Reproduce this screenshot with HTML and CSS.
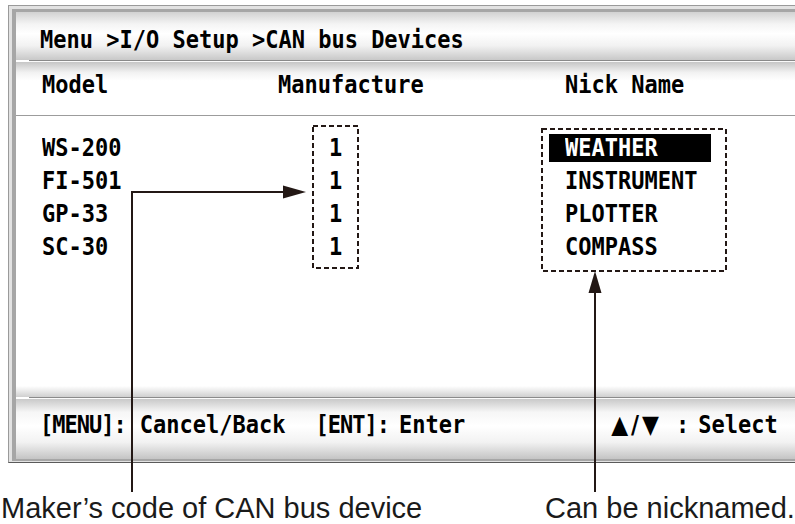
FILE: index.html
```html
<!DOCTYPE html>
<html>
<head>
	<title>CAN bus Devices</title>
	<meta charset="UTF-8">
	<meta name="viewport" content="width=device-width, initial-scale=1.0">
	<link rel="stylesheet" href="styles.css">
</head>
<body>
	<div class="figure">
		<div class="bezel">
			<div class="screen">
				<div class="title"><span class="lcd">Menu &gt;I/O Setup &gt;CAN bus Devices</span></div>
				<div class="rule"></div>
				<div class="head">
					<span class="lcd head-model">Model</span>
					<span class="lcd head-maker">Manufacture</span>
					<span class="lcd">Nick Name</span>
				</div>
				<div class="list">
					<div class="model">
						<span class="lcd">WS-200</span>
						<span class="lcd">FI-501</span>
						<span class="lcd">GP-33</span>
						<span class="lcd">SC-30</span>
					</div>
					<div class="maker">
						<span class="lcd">1</span>
						<span class="lcd">1</span>
						<span class="lcd">1</span>
						<span class="lcd">1</span>
					</div>
					<div class="nick">
						<div class="nick-row sel"><span class="lcd">WEATHER</span></div>
						<div class="nick-row"><span class="lcd">INSTRUMENT</span></div>
						<div class="nick-row"><span class="lcd">PLOTTER</span></div>
						<div class="nick-row"><span class="lcd">COMPASS</span></div>
					</div>
				</div>
				<div class="band"></div>
				<div class="rule"></div>
				<div class="foot">
					<span class="lcd key">[MENU]</span>
					<span class="lcd">:</span>
					<span class="lcd cancel">Cancel/Back</span>
					<span class="lcd key key-ent">[ENT]</span>
					<span class="lcd">:</span>
					<span class="lcd enter">Enter</span>
					<span class="lcd arrows">▲/▼</span>
					<span class="lcd colon-sel">:</span>
					<span class="lcd select">Select</span>
				</div>
			</div>
		</div>

		<!-- callouts drawn over the screen -->
		<svg class="notes" width="795" height="524" viewBox="0 0 795 524">
			<g fill="none" stroke="#231815" stroke-width="2">
				<rect x="313" y="126" width="45" height="142" stroke-dasharray="5 3"/>
				<rect x="542" y="129" width="184" height="142" stroke-dasharray="5 3"/>
				<polyline points="132,492 132,192 286,192"/>
				<line x1="595" y1="492" x2="595" y2="290"/>
			</g>
			<g fill="#231815">
				<polygon points="283,185.5 306,192 283,198.5"/>
				<polygon points="588.5,293 595,271 601.5,293"/>
			</g>
		</svg>

		<div class="captions">
			<span class="cap-maker">Maker’s code of CAN bus device</span>
			<span>Can be nicknamed.</span>
		</div>
	</div>
</body>
</html>
```

FILE: styles.css
```css
body {
	margin: 0;
	background-color: #fff;
	font-family: "Liberation Sans", Arial, sans-serif;
}
.figure {
	position: relative;
	width: 795px;
	height: 524px;
	overflow: hidden;
}

/* frame round the display */
.bezel {
	margin: 5px 0 0 8px;
	border-top: 1px solid #9a9a9a;
	border-left: 1px solid #9a9a9a;
	border-bottom: 1px solid #5a5a5a;
	padding: 3px 0 1px 3px;
	background-color: #e2e2e2;
}
.screen {
	border-top: 3px solid #a6a6a6;
	border-left: 4px solid #a6a6a6;
	border-bottom: 2px solid #a6a6a6;
	background-color: #fff;
}

/* LCD style text */
.lcd {
	display: block;
	font-family: "DejaVu Sans Mono", "Liberation Mono", monospace;
	font-weight: bold;
	font-size: 22px;
	line-height: 33px;
	color: #000;
	white-space: pre;
	transform: scaleY(1.15);
}

.title {
	height: 48px;
	box-sizing: border-box;
	padding: 11px 0 0 24px;
	background: linear-gradient(#d2d2d2 0%, #f4f4f4 25%, #fff 45%, #f2f2f2 70%, #c8c8c8 100%);
}
.rule {
	height: 1px;
	margin-left: 13px;
	border-top: 1px solid #8a8a8a;
	background-color: #fafafa;
}
.head {
	display: flex;
	align-items: flex-start;
	height: 54px;
	box-sizing: border-box;
	padding: 6px 0 0 26px;
	border-bottom: 1px solid #9c9c9c;
	background: linear-gradient(#c6c6c6 0%, #f2f2f2 20%, #fff 35%, #fff 100%);
}
.head-model {
	width: 236px;
}
.head-maker {
	width: 287px;
}

/* device list */
.list {
	display: flex;
	align-items: flex-start;
	height: 270px;
	box-sizing: border-box;
	padding-top: 15px;
}
.model {
	width: 296px;
	box-sizing: border-box;
	padding-left: 26px;
}
.maker {
	width: 47px;
	text-align: center;
}
.nick {
	width: 162px;
	margin-left: 190px;
}
.nick-row {
	display: flex;
	align-items: center;
	height: 33px;
	box-sizing: border-box;
	padding-left: 16px;
}
.nick-row.sel {
	height: 28px;
	margin: 3px 0 2px;
	background-color: #000;
}
.sel .lcd {
	color: #fff;
	line-height: 28px;
}

/* key guide */
.band {
	height: 11px;
	background: linear-gradient(#fff 0%, #cfcfcf 100%);
}
.foot {
	display: flex;
	align-items: flex-start;
	height: 60px;
	box-sizing: border-box;
	padding: 9px 0 0 24px;
	background: linear-gradient(#c9c9c9 0%, #f6f6f6 22%, #fff 45%, #f2f2f2 72%, #c4c4c4 100%);
}
.key {
	letter-spacing: -1px;
}
.cancel {
	margin-left: 13px;
}
.key-ent {
	margin-left: 30px;
}
.enter {
	margin-left: 9px;
}
.arrows {
	margin-left: 146px;
	font-family: "DejaVu Sans", sans-serif;
	letter-spacing: 3px;
}
.colon-sel {
	margin-left: 14px;
}
.select {
	margin-left: 9px;
}

/* callouts */
.notes {
	position: absolute;
	left: 0;
	top: 0;
}
.captions {
	display: flex;
	margin-top: 29px;
	padding-left: 1px;
	font-size: 29px;
	line-height: 33px;
	color: #1a1a1a;
}
.cap-maker {
	width: 544px;
}
```
